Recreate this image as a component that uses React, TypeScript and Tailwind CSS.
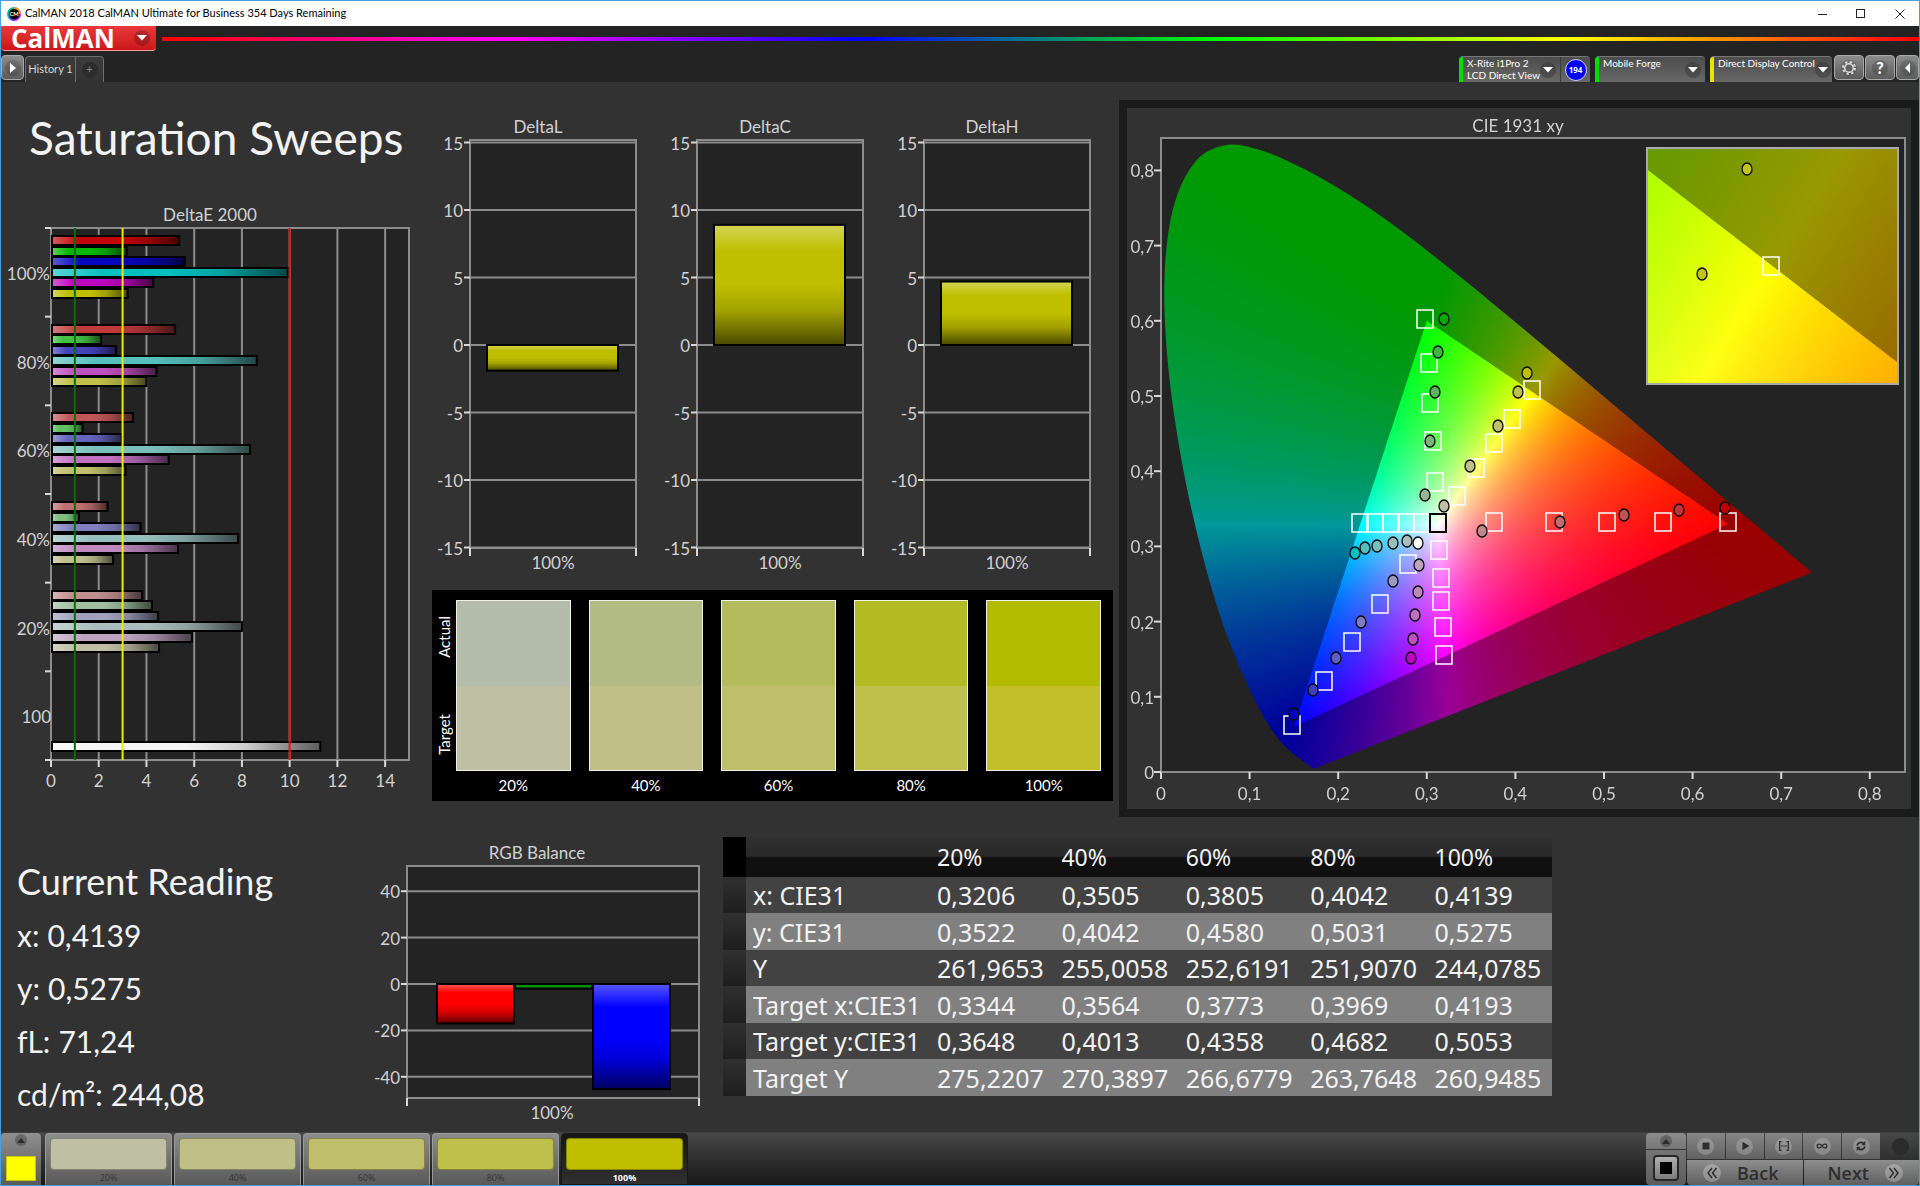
import { useLayoutEffect, useRef, type ReactNode } from "react";

const LEVELS = ["20%", "40%", "60%", "80%", "100%"];

/* ---------- shared chart pieces ---------- */

const AXIS = "#8c8c8c";
const TICK = "#d8d8d8";
const PLOT = "#232323";

function ChartDefs({ id, dir }: { id: string; dir: "h" | "v" }) {
  const end = dir === "h" ? { x2: 1, y2: 0 } : { x2: 0, y2: 1 };
  return (
    <defs>
      <linearGradient id={id} x1={0} y1={0} {...end}>
        <stop offset="0" stopColor="#fff" stopOpacity="0.34" />
        <stop offset="0.22" stopColor="#fff" stopOpacity="0" />
        <stop offset="0.5" stopColor="#000" stopOpacity="0" />
        <stop offset="0.72" stopColor="#000" stopOpacity="0.16" />
        <stop offset="1" stopColor="#000" stopOpacity="0.62" />
      </linearGradient>
    </defs>
  );
}

type BarProps = { x: number; y: number; w: number; h: number; fill: string; shade: string };

function Bar({ x, y, w, h, fill, shade }: BarProps) {
  return (
    <g>
      <rect x={x} y={y} width={w} height={h} fill={fill} />
      <rect x={x} y={y} width={w} height={h} fill={`url(#${shade})`} stroke="#000" strokeWidth={2} />
    </g>
  );
}

/* ---------- DeltaE 2000 ---------- */

const DELTA_E = [
  { label: "100%", values: [5.37, 3.17, 5.6, 9.92, 4.28, 3.21], colors: ["#c00606", "#06b906", "#0606bf", "#06bfbf", "#bf06bf", "#bfbf06"] },
  { label: "80%", values: [5.2, 2.1, 2.73, 8.62, 4.42, 4.0], colors: ["#c03a3a", "#44bf44", "#4444bf", "#55bfbb", "#bf50bf", "#bfbf4c"] },
  { label: "60%", values: [3.44, 1.32, 2.96, 8.34, 4.93, 3.12], colors: ["#c05858", "#64bf64", "#6666bf", "#7abfbb", "#bf70bf", "#bfbf6e"] },
  { label: "40%", values: [2.37, 1.17, 3.75, 7.84, 5.32, 2.6], colors: ["#c07070", "#80bf80", "#8080bf", "#94bfbd", "#bf88bf", "#bfbf8c"] },
  { label: "20%", values: [3.82, 4.23, 4.49, 8.0, 5.91, 4.53], colors: ["#c09090", "#a0bfa0", "#a0a0bf", "#aabfbd", "#bfa4bf", "#bfbfa5"] },
];

function DeltaEChart() {
  const left = 50;
  const top = 28;
  const bottom = 560;
  const right = 408;
  const group = (bottom - top) / 6;
  const sx = (v: number) => left + (v * (right - left)) / 15;
  const limits = [
    { at: 1, color: "#0a6b0a" },
    { at: 3, color: "#ecec00" },
    { at: 10, color: "#e81414" },
  ];
  return (
    <svg viewBox="0 0 431 600" className="block w-full" role="img" aria-label="DeltaE 2000">
      <ChartDefs id="shadeH" dir="h" />
      <text x={209} y={21} textAnchor="middle" className="fill-[#d2d2d2] text-[17px]">DeltaE 2000</text>
      <rect x={left} y={top} width={right - left} height={bottom - top} fill={PLOT} stroke={AXIS} strokeWidth={2} />
      {[2, 4, 6, 8, 10, 12, 14].map((v) => (
        <line key={v} x1={sx(v)} x2={sx(v)} y1={top} y2={bottom} stroke={AXIS} strokeWidth={2} />
      ))}
      {[0, 2, 4, 6, 8, 10, 12, 14].map((v) => (
        <g key={v}>
          <line x1={sx(v)} x2={sx(v)} y1={bottom} y2={bottom + 7} stroke={TICK} strokeWidth={2} />
          <text x={sx(v)} y={587} textAnchor="middle" className="fill-[#d2d2d2] text-[17px]">{v}</text>
        </g>
      ))}
      {[0, 1, 2, 3, 4, 5, 6].map((i) => (
        <line key={i} x1={left - 6} x2={left} y1={top + i * group} y2={top + i * group} stroke={TICK} strokeWidth={2} />
      ))}
      {DELTA_E.map((g, i) => (
        <g key={g.label}>
          <text x={left - 1} y={top + i * group + 52} textAnchor="end" className="fill-[#d2d2d2] text-[17px]">{g.label}</text>
          {g.values.map((v, j) => (
            <Bar key={j} x={left + 1} y={Math.round(top + i * group + 8 + j * 10.5)} w={sx(v) - left - 1} h={9} fill={g.colors[j]} shade="shadeH" />
          ))}
        </g>
      ))}
      <text x={left} y={top + 5 * group + 52} textAnchor="end" className="fill-[#d2d2d2] text-[17px]">100</text>
      <Bar x={left + 1} y={542} w={sx(11.24) - left} h={9} fill="#f4f4f4" shade="shadeH" />
      {limits.map((l) => (
        <line key={l.at} x1={sx(l.at)} x2={sx(l.at)} y1={top} y2={bottom} stroke={l.color} strokeWidth={2} />
      ))}
    </svg>
  );
}

/* ---------- DeltaL / DeltaC / DeltaH ---------- */

function DeltaChart({ title, value }: { title: string; value: number }) {
  const left = 38;
  const right = 204;
  const sy = (v: number) => 233 - v * 13.5;
  const y = Math.min(sy(0), sy(value));
  const shade = `shade${title}`;
  return (
    <svg viewBox="0 0 227 468" className="block w-full" role="img" aria-label={title}>
      <ChartDefs id={shade} dir="v" />
      <text x={106} y={21} textAnchor="middle" className="fill-[#d2d2d2] text-[17px]">{title}</text>
      <rect x={left} y={28} width={right - left} height={408} fill={PLOT} stroke={AXIS} strokeWidth={2} />
      {[15, 10, 5, 0, -5, -10, -15].map((v) => (
        <g key={v}>
          <line x1={left} x2={right} y1={sy(v)} y2={sy(v)} stroke={AXIS} strokeWidth={2} />
          <line x1={left - 6} x2={left} y1={sy(v)} y2={sy(v)} stroke={TICK} strokeWidth={2} />
          <text x={left - 7} y={sy(v) + 7} textAnchor="end" className="fill-[#d2d2d2] text-[17px]">{v}</text>
        </g>
      ))}
      <line x1={left} x2={left} y1={436} y2={444} stroke={TICK} strokeWidth={2} />
      <line x1={right} x2={right} y1={436} y2={444} stroke={TICK} strokeWidth={2} />
      <Bar x={55} y={y} w={131} h={Math.abs(sy(value) - sy(0))} fill="#bfbf00" shade={shade} />
      <text x={121} y={457} textAnchor="middle" className="fill-[#d2d2d2] text-[17px]">100%</text>
    </svg>
  );
}

/* ---------- RGB balance ---------- */

function RgbBalance() {
  const left = 37;
  const right = 329;
  const sy = (v: number) => 145 - v * 2.32;
  const bars = [
    { x: 67, v: -17, fill: "#ff0000" },
    { x: 145, v: -2, fill: "#009000" },
    { x: 223, v: -45.3, fill: "#0000ff" },
  ];
  return (
    <svg viewBox="0 0 340 290" className="block w-full" role="img" aria-label="RGB Balance">
      <ChartDefs id="shadeRgb" dir="v" />
      <text x={167} y={20} textAnchor="middle" className="fill-[#d2d2d2] text-[17px]">RGB Balance</text>
      <rect x={left} y={27} width={right - left} height={232} fill={PLOT} stroke={AXIS} strokeWidth={2} />
      {[40, 20, 0, -20, -40].map((v) => (
        <g key={v}>
          <line x1={left} x2={right} y1={sy(v)} y2={sy(v)} stroke={AXIS} strokeWidth={2} />
          <line x1={left - 6} x2={left} y1={sy(v)} y2={sy(v)} stroke={TICK} strokeWidth={2} />
          <text x={left - 7} y={sy(v) + 7} textAnchor="end" className="fill-[#d2d2d2] text-[17px]">{v}</text>
        </g>
      ))}
      <line x1={left} x2={left} y1={259} y2={267} stroke={TICK} strokeWidth={2} />
      <line x1={right} x2={right} y1={259} y2={267} stroke={TICK} strokeWidth={2} />
      {bars.map((b) => (
        <Bar key={b.x} x={b.x} y={sy(0)} w={77} h={sy(b.v) - sy(0)} fill={b.fill} shade="shadeRgb" />
      ))}
      <text x={182} y={280} textAnchor="middle" className="fill-[#d2d2d2] text-[17px]">100%</text>
    </svg>
  );
}

/* ---------- CIE 1931 ---------- */

const LOCUS: [number, number][] = [
  [0.1741, 0.005], [0.1714, 0.0051], [0.1689, 0.0069], [0.1644, 0.0109], [0.1566, 0.0177], [0.144, 0.0297],
  [0.1355, 0.0399], [0.1241, 0.0578], [0.1096, 0.0868], [0.0913, 0.1327], [0.0687, 0.2007], [0.0454, 0.295],
  [0.0235, 0.4127], [0.0082, 0.5384], [0.0039, 0.6548], [0.0139, 0.7502], [0.0389, 0.812], [0.0743, 0.8338],
  [0.1142, 0.8262], [0.1547, 0.8059], [0.1929, 0.7816], [0.2296, 0.7543], [0.2658, 0.7243], [0.3016, 0.6923],
  [0.3373, 0.6589], [0.3731, 0.6245], [0.4087, 0.5896], [0.4441, 0.5547], [0.4788, 0.5202], [0.5125, 0.4866],
  [0.5448, 0.4544], [0.5752, 0.4242], [0.6029, 0.3965], [0.627, 0.3725], [0.6482, 0.3514], [0.6658, 0.334],
  [0.6915, 0.3083], [0.719, 0.2809], [0.7347, 0.2653],
];

const CIE = { w: 784, h: 701, x0: 34, y0: 664, kx: 886, ky: 752, right: 778, top: 30 };
const INSET = { x: 520, y: 40, w: 251, h: 236, cx: 0.4193, cy: 0.5053, kx: 4450, ky: 4320 };

/** Linear Rec.709 colour of a chromaticity; dimmed where it falls outside the gamut. */
function chroma(x: number, y: number): [number, number, number] {
  const X = x / y;
  const Z = (1 - x - y) / y;
  const rgb = [
    3.2406 * X - 1.5372 - 0.4986 * Z,
    -0.9689 * X + 1.8758 + 0.0415 * Z,
    0.0557 * X - 0.204 + 1.057 * Z,
  ];
  const outside = rgb.some((c) => c < 0);
  const k = (outside ? 153 : 255) / Math.max(...rgb);
  return [Math.max(0, rgb[0]) * k, Math.max(0, rgb[1]) * k, Math.max(0, rgb[2]) * k];
}

function field(w: number, h: number, toXY: (px: number, py: number) => [number, number]) {
  const s = 2;
  const c = document.createElement("canvas");
  c.width = w * s;
  c.height = h * s;
  const g = c.getContext("2d")!;
  const img = g.createImageData(w * s, h * s);
  for (let j = 0; j < h * s; j++) {
    for (let i = 0; i < w * s; i++) {
      const [x, y] = toXY((i + 0.5) / s, (j + 0.5) / s);
      const rgb = chroma(x, Math.max(y, 0.001));
      const o = (j * w * s + i) * 4;
      img.data[o] = rgb[0];
      img.data[o + 1] = rgb[1];
      img.data[o + 2] = rgb[2];
      img.data[o + 3] = 255;
    }
  }
  g.putImageData(img, 0, 0);
  return c;
}

function paintCie(g: CanvasRenderingContext2D) {
  const { w, h, x0, y0, kx, ky, right, top } = CIE;
  g.fillStyle = PLOT;
  g.fillRect(x0, top, right - x0, y0 - top);
  const pts = LOCUS.map(([x, y]) => [x0 + x * kx, y0 - y * ky]);
  g.save();
  g.beginPath();
  g.moveTo(pts[0][0], pts[0][1]);
  for (let i = 0; i < pts.length - 1; i++) {
    const a = pts[Math.max(0, i - 1)];
    const b = pts[i];
    const c = pts[i + 1];
    const d = pts[Math.min(pts.length - 1, i + 2)];
    g.bezierCurveTo(
      b[0] + (c[0] - a[0]) / 6, b[1] + (c[1] - a[1]) / 6,
      c[0] - (d[0] - b[0]) / 6, c[1] - (d[1] - b[1]) / 6,
      c[0], c[1],
    );
  }
  g.closePath();
  g.clip();
  g.drawImage(field(w, h, (px, py) => [(px - x0) / kx, (y0 - py) / ky]), 0, 0, w, h);
  g.restore();
  const n = INSET;
  const zoomed = field(n.w, n.h, (px, py) => [n.cx + (px - n.w / 2) / n.kx, n.cy - (py - n.h / 2) / n.ky]);
  g.drawImage(zoomed, n.x, n.y, n.w, n.h);
}

const TARGETS: [number, number][] = [
  [298, 211], [302, 255], [303, 295], [306, 333], [308, 374],
  [405, 282], [385, 311], [367, 335], [349, 360], [330, 388],
  [233, 415], [248, 415], [264, 415], [279, 415], [295, 415],
  [367, 414], [427, 414], [480, 414], [536, 414], [601, 414],
  [312, 442], [314, 470], [314, 493], [316, 519], [317, 547],
  [281, 456], [253, 496], [225, 534], [197, 573], [165, 617],
];

const READINGS: [number, number, string][] = [
  [317, 211, "#00a800"], [311, 244, "#3fb53f"], [308, 284, "#5cb55c"], [303, 333, "#78b578"], [298, 387, "#96b596"],
  [400, 265, "#bfbf00"], [391, 284, "#bfbf4c"], [371, 318, "#bfbf6e"], [343, 358, "#bfbf8c"], [317, 398, "#bfbfa5"],
  [228, 445, "#00bfbf"], [238, 440, "#55bfbb"], [250, 438, "#7abfbb"], [266, 435, "#94bfbd"], [280, 433, "#aabfbd"],
  [291, 435, "#ffffff"],
  [355, 423, "#c08888"], [433, 414, "#c06c6c"], [497, 407, "#c05252"], [552, 402, "#c03434"], [598, 400, "#c00000"],
  [292, 457, "#bfa4bf"], [291, 484, "#bf88bf"], [288, 507, "#bf70bf"], [286, 531, "#bf50bf"], [284, 550, "#bf00bf"],
  [266, 473, "#9a9abf"], [234, 514, "#7c7cbf"], [209, 550, "#6060bf"], [186, 582, "#4040bf"], [167, 606, "#0000bf"],
];

function CieChart() {
  const ref = useRef<HTMLCanvasElement>(null);
  useLayoutEffect(() => {
    const g = ref.current?.getContext("2d");
    if (g) paintCie(g);
  }, []);
  const { x0, y0, kx, ky, right, top } = CIE;
  const fmt = (i: number) => (i === 0 ? "0" : `0,${i}`);
  return (
    <div className="relative">
      <canvas ref={ref} width={CIE.w} height={CIE.h} className="absolute inset-0 h-full w-full" />
      <svg viewBox="0 0 784 701" className="relative block w-full" role="img" aria-label="CIE 1931 xy">
        <text x={391} y={24} textAnchor="middle" className="fill-[#d2d2d2] text-[17px]">CIE 1931 xy</text>
        <rect x={x0} y={top} width={right - x0} height={y0 - top} fill="none" stroke={AXIS} strokeWidth={2} />
        {[0, 1, 2, 3, 4, 5, 6, 7, 8].map((i) => {
          const x = x0 + i * kx * 0.1;
          const y = y0 - i * ky * 0.1;
          return (
            <g key={i} className="fill-[#d2d2d2] text-[17px]">
              <line x1={x} x2={x} y1={y0} y2={y0 + 7} stroke={TICK} strokeWidth={2} />
              <line x1={x0 - 7} x2={x0} y1={y} y2={y} stroke={TICK} strokeWidth={2} />
              <text x={x} y={692} textAnchor="middle">{fmt(i)}</text>
              <text x={x0 - 7} y={y + 7} textAnchor="end">{fmt(i)}</text>
            </g>
          );
        })}
        <g fill="none" stroke="#fff" strokeWidth={1.5}>
          {TARGETS.map(([x, y]) => (
            <rect key={`${x}-${y}`} x={x - 8} y={y - 9} width={16} height={18} />
          ))}
        </g>
        <rect x={303} y={406} width={16} height={18} fill="none" stroke="#000" strokeWidth={2} />
        <g stroke="#0c0c0c" strokeWidth={1.3}>
          {READINGS.map(([x, y, c]) => (
            <ellipse key={`${x}-${y}`} cx={x} cy={y} rx={5} ry={6} fill={c} />
          ))}
        </g>
        <rect x={INSET.x} y={INSET.y} width={INSET.w} height={INSET.h} fill="none" stroke="#a9a9a9" strokeWidth={2} />
        <rect x={636} y={149} width={16} height={18} fill="none" stroke="#fff" strokeWidth={1.5} />
        <g stroke="#0c0c0c" strokeWidth={1.3} fill="#c3c31c">
          <ellipse cx={620} cy={61} rx={5} ry={6} />
          <ellipse cx={575} cy={166} rx={5} ry={6} />
        </g>
      </svg>
    </div>
  );
}

/* ---------- swatches ---------- */

const SWATCHES = [
  { actual: "bg-[#b4bcab]", target: "bg-[#bfbfa3]" },
  { actual: "bg-[#b2bb84]", target: "bg-[#bfbf87]" },
  { actual: "bg-[#b3bb5c]", target: "bg-[#bfbf6b]" },
  { actual: "bg-[#b3bb22]", target: "bg-[#bfc04c]" },
  { actual: "bg-[#b1bc00]", target: "bg-[#c2bf29]" },
];

function SwatchPanel() {
  return (
    <section className="flex bg-black pt-2.5 pr-3 pb-1.5 pl-1 text-white">
      <div className="flex h-[171px] w-5 shrink-0 flex-col items-start justify-between py-4 text-[15px] leading-4">
        <span className="rotate-180 [writing-mode:vertical-rl]">Actual</span>
        <span className="rotate-180 [writing-mode:vertical-rl]">Target</span>
      </div>
      <div className="grid flex-1 grid-cols-5 gap-x-[18px]">
        {SWATCHES.map((s, i) => (
          <div key={LEVELS[i]} className="text-center">
            <div className="flex h-[171px] flex-col border border-[#f0f0e8]">
              <div className={`flex-1 ${s.actual}`} />
              <div className={`flex-1 ${s.target}`} />
            </div>
            <div className="pt-1 text-[15px] leading-5">{LEVELS[i]}</div>
          </div>
        ))}
      </div>
    </section>
  );
}

/* ---------- table ---------- */

const ROWS: [string, string[]][] = [
  ["x: CIE31", ["0,3206", "0,3505", "0,3805", "0,4042", "0,4139"]],
  ["y: CIE31", ["0,3522", "0,4042", "0,4580", "0,5031", "0,5275"]],
  ["Y", ["261,9653", "255,0058", "252,6191", "251,9070", "244,0785"]],
  ["Target x:CIE31", ["0,3344", "0,3564", "0,3773", "0,3969", "0,4193"]],
  ["Target y:CIE31", ["0,3648", "0,4013", "0,4358", "0,4682", "0,5053"]],
  ["Target Y", ["275,2207", "270,3897", "266,6779", "263,7648", "260,9485"]],
];

function ReadingsTable() {
  return (
    <table className="w-full table-fixed border-collapse self-start text-left font-['Noto_Sans',sans-serif] text-[25px] leading-6 text-[#f2f2f2]">
      <colgroup>
        <col className="w-[23px]" />
        <col className="w-[184px]" />
        <col /><col /><col /><col /><col />
      </colgroup>
      <thead>
        <tr className="h-10 bg-linear-to-b from-[#303030] from-0% via-[#292929] via-48% to-[#101010] to-52%">
          <td className="bg-black" />
          <td />
          {LEVELS.map((l) => (
            <th key={l} scope="col" className="pl-[7px] text-[23px] font-normal">{l}</th>
          ))}
        </tr>
      </thead>
      <tbody>
        {ROWS.map(([label, cells], i) => (
          <tr key={label} className={i % 2 ? "h-[37px] bg-[#808080]" : "h-9 bg-[#424242]"}>
            <td className="bg-linear-to-b from-[#303030] to-[#1e1e1e]" />
            <th scope="row" className="pl-[7px] font-normal whitespace-nowrap">{label}</th>
            {cells.map((c, j) => (
              <td key={j} className="pl-[7px]">{c}</td>
            ))}
          </tr>
        ))}
      </tbody>
    </table>
  );
}

/* ---------- chrome ---------- */

function DropGlyph() {
  return (
    <span className="flex size-4 shrink-0 items-center justify-center rounded-full bg-black/20">
      <svg viewBox="0 0 10 6" className="w-2.5"><path d="M0 0h10L5 5.5z" fill="#fff" /></svg>
    </span>
  );
}

function TitleBar() {
  return (
    <header className="flex h-[25px] items-center bg-white pl-1.5 text-black">
      <svg viewBox="0 0 16 16" className="size-3.5">
        <defs>
          <linearGradient id="ringA" x1="0" y1="0" x2="1" y2="1">
            <stop offset="0" stopColor="#14c832" /><stop offset="0.4" stopColor="#00b4ff" />
            <stop offset="0.7" stopColor="#7020ff" /><stop offset="1" stopColor="#ff2090" />
          </linearGradient>
        </defs>
        <circle cx="8" cy="8" r="8" fill="url(#ringA)" />
        <path d="M8 0a8 8 0 0 1 8 8H8z" fill="#f0a020" />
        <circle cx="8" cy="8" r="6" fill="#0a0a0a" />
        <text x="8" y="10.4" fontSize="6.5" fontWeight="700" fill="#fff" textAnchor="middle">CM</text>
      </svg>
      <h2 className="ml-1 flex-1 text-[11px]">CalMAN 2018 CalMAN Ultimate for Business 354 Days Remaining</h2>
      <button aria-label="Minimize" className="flex h-full w-[38px] items-center justify-center">
        <svg viewBox="0 0 10 10" className="size-2.5"><path d="M0 5.5h9" stroke="#222" /></svg>
      </button>
      <button aria-label="Maximize" className="flex h-full w-[38px] items-center justify-center">
        <svg viewBox="0 0 10 10" className="size-2.5"><rect x="0.5" y="0.5" width="8" height="8" fill="none" stroke="#222" /></svg>
      </button>
      <button aria-label="Close" className="flex h-full w-[39px] items-center justify-center">
        <svg viewBox="0 0 10 10" className="size-2.5"><path d="M.5.5l9 9M9.500.5l-9 9" stroke="#222" /></svg>
      </button>
    </header>
  );
}

function BrandRow() {
  return (
    <div className="flex h-[26px] items-center gap-1.5">
      <button className="flex h-[25px] w-[155px] items-center justify-between self-start rounded-b-sm border-b border-[#f0a0a0] bg-linear-to-b from-[#e8383c] to-[#cc1518] pr-1.5 pl-2.5 text-white">
        <span className="font-['Open_Sans',sans-serif] text-[26px] leading-6 font-bold">CalMAN</span>
        <DropGlyph />
      </button>
      <div className="h-1 flex-1 bg-[linear-gradient(to_right,#f00,#f0f_20%,#00f_40%,#0f0_60%,#ff0_80%,#f00)]" />
    </div>
  );
}

type DeviceProps = { stripe: string; width: string; children: ReactNode; badge?: string };

function Device({ stripe, width, children, badge }: DeviceProps) {
  return (
    <div className={`flex h-[26px] overflow-hidden rounded-t border-t border-[#777] bg-linear-to-b from-[#4c4c4c] to-[#686868] ${width}`}>
      <div className={`w-1 shrink-0 ${stripe}`} />
      <button className="flex flex-1 items-start justify-between pl-1 text-left text-[10px] leading-3 whitespace-nowrap text-white">
        <span>{children}</span>
        <span className="mr-1 self-center"><DropGlyph /></span>
      </button>
      {badge && (
        <button className="flex w-[30px] items-center justify-center border-l border-[#3a3a3a]">
          <span className="flex size-[22px] shrink-0 items-center justify-center rounded-full border border-[#cfcfff] bg-[#0000f5] font-['Open_Sans',sans-serif] text-[8px] font-bold text-white">{badge}</span>
        </button>
      )}
    </div>
  );
}

function SquareButton({ label, width, children }: { label: string; width: string; children: ReactNode }) {
  return (
    <button aria-label={label} className={`flex h-[25px] items-center justify-center rounded border border-[#a8a8a8] bg-linear-to-b from-[#8c8c8c] to-[#5c5c5c] ${width}`}>
      <span className="flex size-4 items-center justify-center rounded-full bg-black/15">{children}</span>
    </button>
  );
}

function ToolRow() {
  return (
    <div className="flex h-[30px] items-end">
      <div className="mb-0.5">
        <SquareButton label="Run" width="w-[23px]">
          <svg viewBox="0 0 8 10" className="h-2.5"><path d="M1 0l6 5-6 5z" fill="#fff" /></svg>
        </SquareButton>
      </div>
      <nav className="ml-px flex h-[26px] rounded-t border border-b-0 border-[#6e6e6e] bg-linear-to-b from-[#3c3c3c] to-[#323232] text-[11px] text-[#d8d8d8]">
        <button className="w-[49px]">History 1</button>
        <button aria-label="Add tab" className="flex w-7 items-center justify-center border-l border-[#6e6e6e]">
          <span className="flex size-4 items-center justify-center rounded-full bg-[#2c2c2c] text-[#8a8a8a]">+</span>
        </button>
      </nav>
      <div className="ml-auto flex gap-[5px]">
        <Device stripe="bg-[#00e000]" width="w-[131px]" badge="194">X-Rite i1Pro 2<br />LCD Direct View</Device>
        <Device stripe="bg-[#00e000]" width="w-[110px]">Mobile Forge</Device>
        <Device stripe="bg-[#e6e600]" width="w-[122px]">Direct Display Control</Device>
      </div>
      <div className="mb-0.5 ml-0.5 flex gap-px">
        <SquareButton label="Settings" width="w-[30px]">
          <svg viewBox="0 0 16 16" className="size-4">
            <circle cx="8" cy="8" r="4.300" fill="none" stroke="#d8d8d8" strokeWidth="1.6" />
            <circle cx="8" cy="8" r="6" fill="none" stroke="#d8d8d8" strokeWidth="2" strokeDasharray="2.350 2.360" />
          </svg>
        </SquareButton>
        <SquareButton label="Help" width="w-[30px]">
          <span className="text-base leading-4 font-black text-white">?</span>
        </SquareButton>
        <SquareButton label="Collapse" width="w-[23px]">
          <svg viewBox="0 0 8 10" className="h-2.5"><path d="M6 0L1 5l5 5z" fill="#fff" /></svg>
        </SquareButton>
      </div>
    </div>
  );
}

/* ---------- bottom bar ---------- */

const PATCHES = ["bg-[#bfbfa3]", "bg-[#bfbf87]", "bg-[#bfbf6b]", "bg-[#bfbf4c]", "bg-[#bfbf00]"];

function UpGlyph() {
  return (
    <span className="flex size-3 items-center justify-center rounded-full bg-black/25">
      <svg viewBox="0 0 8 5" className="w-2"><path d="M0 5h8L4 0z" fill="#2a2a2a" /></svg>
    </span>
  );
}

const DARK = "#2e2e2e";
const TRANSPORT: [string, ReactNode][] = [
  ["Stop", <rect x="3" y="3" width="8" height="8" fill={DARK} />],
  ["Play", <path d="M4 2l8 5-8 5z" fill={DARK} />],
  ["Range", <g fill="none" stroke={DARK} strokeWidth="1.5"><path d="M4 2H2v10h2M10 2h2v10h-2" /><path d="M4 7h1.300M6.400 7h1.300M8.700 7H10" /></g>],
  ["Loop", <path d="M7 7C5.800 5.200 4.700 4.700 3.600 4.700a2.300 2.300 0 0 0 0 4.600C4.700 9.300 5.800 8.800 7 7s2.300-2.300 3.400-2.300a2.300 2.300 0 0 1 0 4.600C9.300 9.300 8.200 8.800 7 7z" fill="none" stroke={DARK} strokeWidth="1.400" />],
  ["Refresh", <g><path d="M2.500 6.500A4.500 4.500 0 0 1 10 4M11.500 7.500A4.500 4.500 0 0 1 4 10" fill="none" stroke={DARK} strokeWidth="2" /><path d="M12 1v5H7.500zM2 13V8h4.500z" fill={DARK} /></g>],
];

function Chevrons({ flip }: { flip?: boolean }) {
  return (
    <span className="flex size-[18px] items-center justify-center rounded-full bg-white/25">
      <svg viewBox="0 0 12 12" className={`size-3 ${flip ? "rotate-180" : ""}`}>
        <path d="M6 1L2 6l4 5M10.500 1l-4 5 4 5" fill="none" stroke="#2a2a2a" strokeWidth="1.4" />
      </svg>
    </span>
  );
}

function BottomBar() {
  return (
    <footer className="flex h-[53px] border-t border-[#3f3f3f] bg-linear-to-b from-[#484848] to-[#181818]">
      <button aria-label="Current color" className="flex w-10 flex-col items-center justify-between rounded-t bg-linear-to-b from-[#8f8f8f] to-[#5a5a5a] pt-px pb-1">
        <UpGlyph />
        <span className="h-[25px] w-[30px] border border-[#c8c800] bg-[#ffff00]" />
      </button>
      <div className="ml-1 flex gap-0.5">
        {LEVELS.map((l, i) => (
          <button
            key={l}
            className={`flex w-[127px] flex-col rounded-t border px-1 pt-1 font-['Open_Sans',sans-serif] text-[9px] ${
              i === 4
                ? "border-[#1a1a1a] bg-linear-to-b from-[#161616] to-[#303030] font-bold text-white"
                : "border-[#9a9a9a] border-b-[#555] bg-linear-to-b from-[#8c8c8c] to-[#5a5a5a] text-[#333]"
            }`}
          >
            <span className={`h-8 w-full rounded-sm border border-black/30 ${PATCHES[i]}`} />
            <span className="w-full pt-0.5 text-center leading-3">{l}</span>
          </button>
        ))}
      </div>
      <div className="ml-auto flex gap-px">
        <div className="flex w-10 flex-col gap-px">
          <button aria-label="Expand" className="flex h-4 items-center justify-center rounded-t bg-linear-to-b from-[#8c8c8c] to-[#777]"><UpGlyph /></button>
          <button aria-label="Pattern window" className="flex flex-1 items-center justify-center rounded-b bg-linear-to-b from-[#757575] to-[#5c5c5c]">
            <span className="flex size-[26px] items-center justify-center rounded border-2 border-[#262626] bg-linear-to-b from-[#b0b0b0] to-[#7c7c7c]">
              <span className="size-3 bg-black" />
            </span>
          </button>
        </div>
        <div className="flex w-[232px] flex-col gap-px">
          <div className="grid h-[26px] grid-cols-6 gap-px">
            {TRANSPORT.map(([name, glyph]) => (
              <button key={name} aria-label={name} className="flex items-center justify-center bg-linear-to-b from-[#868686] to-[#626262]">
                <span className="flex size-[17px] items-center justify-center rounded-full bg-white/20">
                  <svg viewBox="0 0 14 14" className="size-3">{glyph}</svg>
                </span>
              </button>
            ))}
            <button aria-label="Record" disabled className="flex items-center justify-center">
              <span className="size-[17px] rounded-full bg-[#2b2b2b]" />
            </button>
          </div>
          <div className="grid flex-1 grid-cols-2 gap-px font-['Open_Sans',sans-serif] text-lg leading-5 font-semibold text-[#2e2e2e]">
            <button className="flex items-center gap-4 rounded-bl bg-linear-to-b from-[#8e8e8e] to-[#606060] pl-4"><Chevrons />Back</button>
            <button className="flex items-center justify-end gap-4 rounded-br bg-linear-to-b from-[#8e8e8e] to-[#606060] pr-4">Next<Chevrons flip /></button>
          </div>
        </div>
      </div>
    </footer>
  );
}

/* ---------- page ---------- */

export default function App() {
  return (
    <div className="flex min-h-screen flex-col border border-[#4aa0dc] bg-[#323232] font-['Lato',sans-serif] text-[#f2f2f2]">
      <TitleBar />
      <div className="bg-[#232323]">
        <BrandRow />
        <ToolRow />
      </div>
      <main className="flex-1">
        <div className="grid grid-cols-[431fr_681fr_6fr_800fr]">
          <section>
            <h1 className="pt-[26px] pl-7 text-[46px] leading-[60px] whitespace-nowrap">Saturation Sweeps</h1>
            <div className="pt-8"><DeltaEChart /></div>
          </section>
          <section className="pt-[30px]">
            <div className="grid grid-cols-3">
              <DeltaChart title="DeltaL" value={-1.9} />
              <DeltaChart title="DeltaC" value={8.9} />
              <DeltaChart title="DeltaH" value={4.7} />
            </div>
            <div className="pt-2.5"><SwatchPanel /></div>
          </section>
          <div />
          <section className="mt-[18px] self-start border-8 border-[#1b1b1b]">
            <CieChart />
          </section>
        </div>
        <div className="grid grid-cols-[369fr_340fr_13fr_829fr_367fr] pt-5">
          <section className="pl-4 text-[30px]">
            <h2 className="pt-6 text-[36px] leading-10">Current Reading</h2>
            <dl className="grid auto-rows-[53px] items-center pt-2">
              {[["x", "0,4139"], ["y", "0,5275"], ["fL", "71,24"], ["cd/m²", "244,08"]].map(([k, v]) => (
                <div key={k} className="flex gap-2"><dt>{k}:</dt><dd>{v}</dd></div>
              ))}
            </dl>
          </section>
          <div className="pt-0.5"><RgbBalance /></div>
          <div />
          <ReadingsTable />
        </div>
      </main>
      <BottomBar />
    </div>
  );
}
